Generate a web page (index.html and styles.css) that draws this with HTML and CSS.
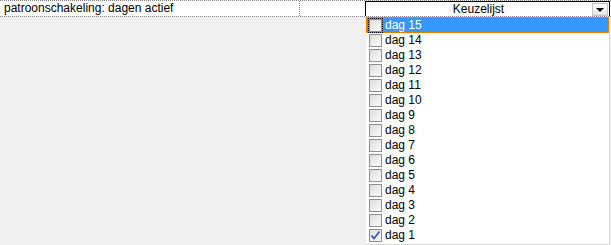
FILE: index.html
```html
<!DOCTYPE html>
<html lang="nl">
<head>
    <meta charset="UTF-8">
    <title>Patroonschakeling</title>
    <link rel="stylesheet" href="styles.css">
</head>
<body>
    <div class="row">
        <div class="cell label">patroonschakeling: dagen actief</div>
        <div class="cell spacer"></div>
        <div class="combo">
            <span class="combo-text">Keuzelijst</span>
            <span class="combo-btn"><span class="arrow"></span></span>
        </div>
    </div>

    <ul class="dropdown">
        <li class="item selected"><span class="box"></span><span class="text">dag 15</span></li>
        <li class="item"><span class="box"></span><span class="text">dag 14</span></li>
        <li class="item"><span class="box"></span><span class="text">dag 13</span></li>
        <li class="item"><span class="box"></span><span class="text">dag 12</span></li>
        <li class="item"><span class="box"></span><span class="text">dag 11</span></li>
        <li class="item"><span class="box"></span><span class="text">dag 10</span></li>
        <li class="item"><span class="box"></span><span class="text">dag 9</span></li>
        <li class="item"><span class="box"></span><span class="text">dag 8</span></li>
        <li class="item"><span class="box"></span><span class="text">dag 7</span></li>
        <li class="item"><span class="box"></span><span class="text">dag 6</span></li>
        <li class="item"><span class="box"></span><span class="text">dag 5</span></li>
        <li class="item"><span class="box"></span><span class="text">dag 4</span></li>
        <li class="item"><span class="box"></span><span class="text">dag 3</span></li>
        <li class="item"><span class="box"></span><span class="text">dag 2</span></li>
        <li class="item">
            <span class="box"><svg width="11" height="11" viewBox="0 0 11 11"><path d="M1.5 5.5 L4 8.5 L9.5 1.5" fill="none" stroke="#2a4fa8" stroke-width="1.6"/></svg></span><span class="text">dag 1</span>
        </li>
    </ul>
</body>
</html>
```

FILE: styles.css
```css
body {
    margin: 0;
    background-color: #f0f0f0;
    font-family: "Liberation Sans", Arial, sans-serif;
    font-size: 12px;
    color: #000;
}

.row {
    display: flex;
    height: 15px;
    background-color: #fff;
    border-top: 1px dotted #808080;
    border-bottom: 1px dotted #808080;
}

.cell {
    line-height: 15px;
}

.label {
    width: 295px;
    padding-left: 4px;
    border-right: 1px dotted #808080;
}

.spacer {
    width: 65px;
}

.combo {
    position: relative;
    flex: 1;
    margin-right: 1px;
    border: 1px solid #000;
    border-bottom: none;
    text-align: center;
    line-height: 15px;
}

.combo-text {
    padding-right: 18px;
}

.combo-btn {
    position: absolute;
    right: 1px;
    top: 1px;
    width: 16px;
    height: 13px;
    background: linear-gradient(#fdfdfd, #e2e2e2);
    border: 1px solid #c4c4c4;
    box-sizing: border-box;
}

.arrow {
    position: absolute;
    left: 3px;
    top: 4px;
    border-left: 4px solid transparent;
    border-right: 4px solid transparent;
    border-top: 4px solid #000;
}

.dropdown {
    width: 243px;
    margin: 0 0 0 366px;
    padding: 0 0 1px 0;
    list-style: none;
    background-color: #fff;
    border-right: 1px solid #d8d8d8;
    border-bottom: 1px solid #d8d8d8;
}

.item {
    display: flex;
    align-items: center;
    height: 15px;
    padding-left: 3px;
    box-sizing: border-box;
}

.item.selected {
    height: 16px;
    background-color: #3399ff;
    color: #fff;
    border: 1px dotted #ff8c00;
    padding-left: 2px;
}

.box {
    width: 11px;
    height: 11px;
    border: 1px solid #8f8f8f;
    background: linear-gradient(135deg, #dcdcdc, #fbfbfb);
    display: flex;
    align-items: center;
    justify-content: center;
    flex-shrink: 0;
}

.item.selected .box {
    outline: 1px dotted #000;
    outline-offset: 0;
}

.text {
    margin-left: 3px;
    line-height: 15px;
}
```
